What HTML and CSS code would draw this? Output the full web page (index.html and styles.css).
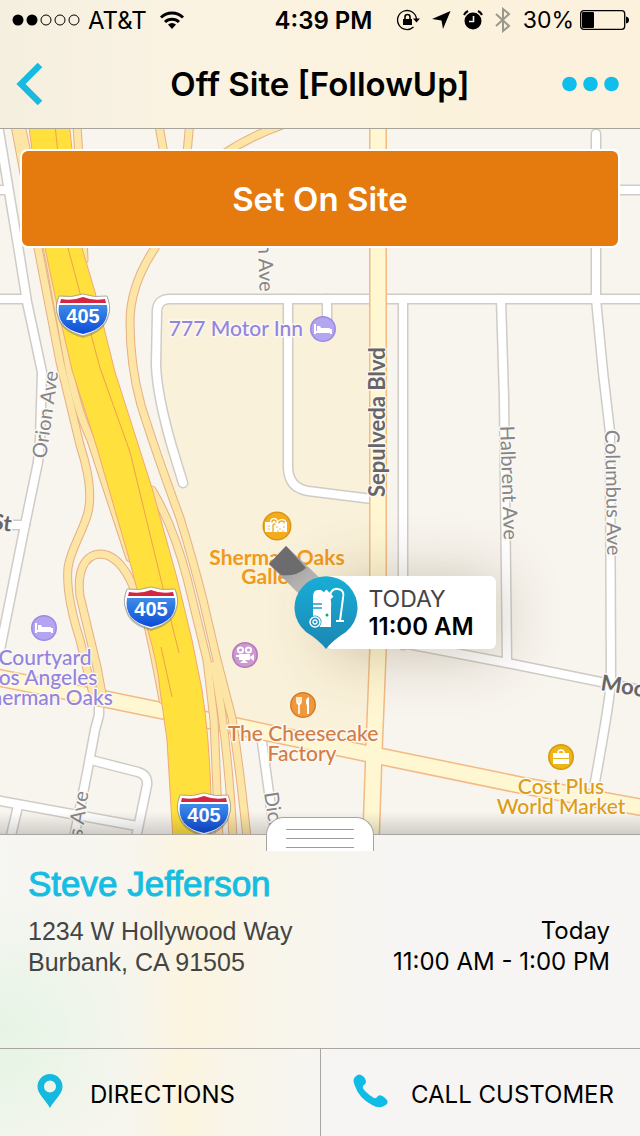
FILE: index.html
```html
<!DOCTYPE html>
<html lang="en">
<head>
    <meta charset="UTF-8">
    <meta name="viewport" content="width=device-width, initial-scale=1.0">
    <title>Off Site [FollowUp]</title>
    <link rel="stylesheet" href="styles.css">
</head>
<body>
    <header class="top">
        <div class="status-bar">
            <div class="status-left">
                <svg width="68" height="12" viewBox="0 0 68 12">
                    <circle cx="6" cy="6" r="5.5"/>
                    <circle cx="20" cy="6" r="5.5"/>
                    <g fill="none" stroke="#000">
                        <circle cx="34" cy="6" r="5"/>
                        <circle cx="48" cy="6" r="5"/>
                        <circle cx="62" cy="6" r="5"/>
                    </g>
                </svg>
                <span>AT&amp;T</span>
                <svg class="wifi" width="32" height="20" viewBox="-4 0 32 20">
                    <g fill="none" stroke="#000" stroke-width="3">
                        <path d="M2 7.500a16 16 0 0 1 22 0"/>
                        <path d="M6 12a10 10 0 0 1 14 0"/>
                    </g>
                    <path d="M13 19l-4-4.500a6 6 0 0 1 8 0z"/>
                </svg>
            </div>
            <div class="status-time">4:39 PM</div>
            <div class="status-right">
                <svg width="24" height="22" viewBox="0 0 24 22">
                    <path d="M20.500 10a9.500 9.500 0 1 0-3 8" fill="none" stroke="#000" stroke-width="1.300"/>
                    <path d="M17 9.500h7l-3.500 4z"/>
                    <path d="M7 10h9v6H7z"/>
                    <path d="M9 10V8a2.500 2.500 0 0 1 5 0v2" fill="none" stroke="#000" stroke-width="1.600"/>
                </svg>
                <svg width="19" height="18" viewBox="0 0 19 18">
                    <path d="M18.500 0L11 18l-1.500-8.500L0 8z"/>
                </svg>
                <svg width="20" height="20" viewBox="0 0 20 20">
                    <circle cx="10" cy="11" r="8.500"/>
                    <path d="M1 5a8 8 0 0 1 4-4M15 1a8 8 0 0 1 4 4" fill="none" stroke="#000" stroke-width="2"/>
                    <path d="M10.500 6v5.500H6" fill="none" stroke="#fbf3dd" stroke-width="1.600"/>
                </svg>
                <svg width="16" height="26" viewBox="0 0 16 26" fill="none" stroke="#9c978b" stroke-width="2">
                    <path d="M1 7l13 12-6 5V2l6 5L1 19"/>
                </svg>
                <span class="battery">30%
                    <svg width="49" height="20" viewBox="0 0 49 20">
                        <rect x=".7" y=".7" width="44" height="18.600" rx="3" fill="none" stroke="#000" stroke-width="1.300"/>
                        <rect x="2" y="2" width="12" height="16" rx="1"/>
                        <path d="M46 6.500q3 .5 3 3.500t-3 3.500z"/>
                    </svg>
                </span>
            </div>
        </div>
        <nav class="nav-bar">
            <button class="nav-btn back" aria-label="Back">
                <svg width="28" height="44" viewBox="0 0 28 44">
                    <path d="M24 3L5 22l19 19" fill="none" stroke="#18bbdf" stroke-width="6.500"/>
                </svg>
            </button>
            <h1 class="title">Off Site [FollowUp]</h1>
            <button class="nav-btn more" aria-label="More">
                <svg width="57" height="16" viewBox="0 0 57 16" fill="#0fbeea">
                    <circle cx="7.500" cy="8" r="7.300"/>
                    <circle cx="28.500" cy="8" r="7.300"/>
                    <circle cx="49.500" cy="8" r="7.300"/>
                </svg>
            </button>
        </nav>
    </header>

    <main class="map">
        <svg class="map-art" viewBox="0 129 640 705">
            <defs>
                <linearGradient id="shieldBlue" x1="0" y1="0" x2="0" y2="1">
                    <stop offset="0" stop-color="#3f8be8"/>
                    <stop offset="1" stop-color="#0c4bd8"/>
                </linearGradient>
                <linearGradient id="stick" x1="0" y1="0" x2="1" y2="1">
                    <stop offset="0" stop-color="#8b8b8b"/>
                    <stop offset="1" stop-color="#c9c9c9"/>
                </linearGradient>
                <linearGradient id="edgeShade" x1="0" y1="0" x2="0" y2="1">
                    <stop offset="0" stop-color="#000" stop-opacity="0"/>
                    <stop offset="1" stop-color="#000" stop-opacity=".16"/>
                </linearGradient>

                <g id="streets">
                    <path d="M-2 125L20 258L27 302L42 372L40 440L38 462L25 525L7 615L0 650"/>
                    <path d="M-5 190H7M-5 299H26M5 525H25"/>
                    <path d="M183 483L172 447Q157 395 156 365L157 312Q157 299 170 299H645"/>
                    <path d="M288 299V468Q289 488 308 491L372 499"/>
                    <path d="M327 299V325"/>
                    <path d="M403 299V645"/>
                    <path d="M501 299L504 398L507 662"/>
                    <path d="M596 134V299L603 372L610 432L611 680Q610 700 595 782"/>
                    <path d="M615 190H645M403 643L507 663L645 691"/>
                    <path d="M99 700L99 715L95 730L87 773L74 838"/>
                    <path d="M95 761L138 772Q148 775 147 785L136 838"/>
                    <path d="M-5 800L137 826M18 806L10 840"/>
                    <path d="M262 742L270 800L275 838"/>
                </g>
                <g id="arterials">
                    <path d="M378 125V650L374 750L371 838"/>
                    <path d="M-5 677L100 698L207 720L374 755L520 785L645 808"/>
                </g>
                <g id="ramps">
                    <path d="M15 125L38 248L60 362L80 445Q94 488 88 512C84 530 70 550 68 568C66 590 72 615 80 640L92 690"/>
                    <path d="M21 125L50 262L68 362Q76 408 91 440L130 558"/>
                    <path d="M138 600C130 574 117 554 100 554C83 555 77 574 80 596L97 667L102 694"/>
                    <path d="M77 125L81 190L84 260"/>
                    <path d="M158 120L166 165M190 120L186 165M222 155Q250 136 285 124"/>
                    <path d="M155 248Q130 285 130 322Q130 365 141 405Q155 450 180 518Q193 560 203 600L217 660L232 718Q240 770 247 838"/>
                    <path d="M152 490Q173 525 187 578L207 660L214 720L219 838"/>
                    <path d="M214 665Q228 740 233 838"/>
                    <path d="M143 605Q152 640 163 700"/>
                </g>

                <g id="shield">
                    <path d="M-25-17Q-12-15 0-21Q12-15 25-17Q28-8 26 0Q23 17 0 23Q-23 17-26 0Q-28-8-25-17Z" fill="#555" opacity=".35"/>
                    <path d="M-24-19Q-11-17 0-21Q11-17 24-19Q28-8 26-2Q23 15 0 21Q-23 15-26-2Q-28-8-24-19Z" fill="#fff" stroke="#8a8a8a" stroke-width=".7"/>
                    <path d="M-22-16Q-10-14 0-18Q10-14 22-16L23-12H-23Z" fill="#d52540"/>
                    <path d="M-24-10H24Q28 13 0 19Q-28 13-24-10Z" fill="url(#shieldBlue)"/>
                    <text class="shield-text" y="8">405</text>
                </g>
                <g id="bed">
                    <circle r="13" fill="#9c89e4"/>
                    <circle r="11.500" fill="#b4a5f2"/>
                    <path d="M-8-5V5M-8 3H8M8 5V0" fill="none" stroke="#fff" stroke-width="2"/>
                    <path d="M-6-3h3l1 2 9 0v3h-13z" fill="#fff"/>
                </g>
            </defs>

            <rect y="129" width="640" height="705" fill="#f8f4ee"/>
            <path d="M161 303H378V752L232 718L205 600L160 440Z" fill="#faf1da"/>

            <use href="#streets" class="line street-edge"/>
            <use href="#streets" class="line street"/>
            <use href="#arterials" class="line arterial-edge"/>
            <use href="#arterials" class="line arterial"/>
            <use href="#ramps" class="line ramp-edge"/>
            <use href="#ramps" class="line ramp"/>

            <!-- 405 freeway -->
            <path class="freeway" d="M28 120L45 248L57 305L72 370L97 448L128 555L147 627Q158 665 160 690L167 740L173 840H211V793Q209 735 202 690L192 640L177 578L152 488L115 372L95 292L82 248L69 120Z"/>
            <path class="freeway-line" d="M55 125L68 248L100 368L130 452L163 588L179 653M161 647L172 697"/>

            <g class="road-label">
                <text transform="translate(46 459) rotate(-82)">Orion Ave</text>
                <text transform="translate(258 243) rotate(88)">n Ave</text>
                <text transform="translate(500 426) rotate(88)">Halbrent Ave</text>
                <text transform="translate(605 430) rotate(89)">Columbus Ave</text>
                <text transform="translate(82 838) rotate(-82)">s Ave</text>
                <text transform="translate(264 793) rotate(81)">Dickens</text>
            </g>
            <g class="road-label main-road">
                <text transform="translate(385 497) rotate(-90)">Sepulveda Blvd</text>
                <text transform="translate(600 690) rotate(9)">Moorpark</text>
                <text transform="translate(-9 529) rotate(7)">St</text>
            </g>

            <use href="#shield" x="83" y="315"/>
            <use href="#shield" x="151" y="608"/>
            <use href="#shield" x="204" y="814"/>

            <!-- points of interest -->
            <use href="#bed" x="323" y="329"/>
            <use href="#bed" x="44" y="628"/>
            <g transform="translate(277 526)">
                <circle r="14.500" fill="#dc9416"/>
                <circle r="13" fill="#f3ad1c"/>
                <path d="M-9-4h2q0-4 4-4t4 4h0q0-3 4-3t4 3h1v10h-22v-10z" fill="#fff"/>
                <path d="M-5-4q0-2 2-2t2 2M2-3q0-2 3-2t2 2M-2-2q-2 0-2 2v6" fill="none" stroke="#eda721" stroke-width="1.300" stroke-linecap="round"/>
                <path d="M-8 0v0M-8 3v0M0 1v0M3 3v0M7 1v0M1 5v0M6 5v0" stroke="#eda721" stroke-width="1.500" stroke-linecap="round"/>
            </g>
            <g transform="translate(245 655)">
                <circle r="13" fill="#b27ab8"/>
                <circle r="11.500" fill="#cb99d0"/>
                <circle cx="-4.500" cy="-5" r="2.600" fill="none" stroke="#fff" stroke-width="2"/>
                <circle cx="3.500" cy="-5" r="2.600" fill="none" stroke="#fff" stroke-width="2"/>
                <path d="M-6-1H5v6h-11zM5 2l4-3v7l-4-3zM-5 8l4-4 4 4" fill="#fff"/>
                <path d="M-9 1h3" stroke="#fff" stroke-width="2"/>
            </g>
            <g transform="translate(303 705)">
                <circle r="13" fill="#d77c2d"/>
                <circle r="11.500" fill="#ee993b"/>
                <path d="M-6-8v5q0 2 2 2.500V9M-2-8v5q0 2-2 2.500M-4-8v7" fill="none" stroke="#fff" stroke-width="1.600"/>
                <path d="M4 9V1Q1-6 6-8V9z" fill="#fff"/>
            </g>
            <g transform="translate(561 757)">
                <circle r="13" fill="#d8970b"/>
                <circle r="11.500" fill="#ecb518"/>
                <path d="M-8-4H8V1H-8zM-8 2H8V7H-8z" fill="#fff"/>
                <path d="M-3-4q0-3 3-3t3 3" fill="none" stroke="#fff" stroke-width="1.500"/>
            </g>

            <g class="poi-label">
                <text class="lodging end" x="303" y="336">777 Motor Inn</text>
                <g class="lodging">
                    <text x="45" y="665">Courtyard</text>
                    <text x="43" y="685">Los Angeles</text>
                    <text x="46" y="705">Sherman Oaks</text>
                </g>
                <g class="mall">
                    <text x="277" y="565">Sherman Oaks</text>
                    <text x="277" y="584">Galleria</text>
                </g>
                <g class="food">
                    <text x="303" y="741">The Cheesecake</text>
                    <text x="302" y="761">Factory</text>
                </g>
                <g class="shop">
                    <text x="561" y="794">Cost Plus</text>
                    <text x="561" y="814">World Market</text>
                </g>
            </g>

            <path d="M286 546L269 564L300 595L322 580Z" fill="url(#stick)"/>
            <path d="M286 546L269 564L281 575Q296 577 306 568Z" fill="#6d6d6f"/>
            <rect y="812" width="640" height="22" fill="url(#edgeShade)"/>
        </svg>

        <button class="set-btn">Set On Site</button>

        <div class="callout">
            <svg class="pin" width="64" height="74" viewBox="0 0 64 74">
                <defs>
                    <linearGradient id="pinBlue" x1="0" y1="0" x2="0" y2="1">
                        <stop offset="0" stop-color="#17aed6"/>
                        <stop offset="1" stop-color="#1c86b3"/>
                    </linearGradient>
                </defs>
                <path d="M32 73Q25 64 12 56A31.500 31.500 0 1 1 52 56Q39 64 32 73Z" fill="url(#pinBlue)"/>
                <!-- vacuum cleaner -->
                <path d="M19 42V21Q19 14 24 14H27L35 20Q38 24 37 32V51H26Z" fill="#fff"/>
                <path d="M19 28H28M19 32H28" stroke="#1a9fca" stroke-width="1.300"/>
                <circle cx="33" cy="39" r="1.500" fill="#13a47a"/>
                <circle cx="21" cy="46" r="6.500" fill="#1a94c0"/>
                <circle cx="21" cy="46" r="5" fill="none" stroke="#fff" stroke-width="1.500"/>
                <circle cx="21" cy="46" r="2" fill="none" stroke="#fff" stroke-width="1.300"/>
                <path d="M31 15l7 7" stroke="#fff" stroke-width="4"/>
                <path d="M36 19Q38 12 44 13Q51 14 49 22L46 45M42 45h8" fill="none" stroke="#fff" stroke-width="2"/>
            </svg>
            <div class="callout-text">
                <span>TODAY</span>
                <strong>11:00 AM</strong>
            </div>
        </div>
    </main>

    <section class="panel">
        <button class="handle" aria-label="Drag panel">
            <svg width="68" height="20" viewBox="0 0 68 20" stroke="#9a9a9a">
                <path d="M0 .5h68M0 9.500h68M0 18.500h68"/>
            </svg>
        </button>
        <h2 class="name">Steve Jefferson</h2>
        <div class="details">
            <address class="address">1234 W Hollywood Way<br>Burbank, CA 91505</address>
            <div class="slot">Today<br>11:00 AM - 1:00 PM</div>
        </div>
    </section>

    <footer class="actions">
        <button class="action">
            <span class="action-icon">
                <svg width="26" height="34" viewBox="0 0 26 34">
                    <path fill="#13b9df" fill-rule="evenodd" d="M13 0A12.500 12.500 0 0 0 .5 12.500C.5 20 8 25 13 34C18 25 25.500 20 25.500 12.500A12.500 12.500 0 0 0 13 0ZM13 6.500A6 6 0 1 1 13 18.500A6 6 0 1 1 13 6.500Z"/>
                </svg>
            </span>
            DIRECTIONS
        </button>
        <button class="action">
            <span class="action-icon">
                <svg width="36" height="34" viewBox="0 0 36 34">
                    <path fill="#0fbce6" d="M2 3Q6-2 11 3Q15 8 11 11Q8 13 12 17Q17 22 21 24Q23 25 25 22Q28 20 32 24L34 26Q36 30 31 32Q26 35 19 31Q6 24 2 12Q-1 6 2 3Z"/>
                </svg>
            </span>
            CALL CUSTOMER
        </button>
    </footer>
</body>
</html>
```

FILE: styles.css
```css
* {
    box-sizing: border-box;
}
body {
    margin: 0;
    font-family: Inter, "Liberation Sans", sans-serif;
    color: #000;
    background-color: #f7f5f3;
    min-height: 100vh;
    display: flex;
    flex-direction: column;
}
button {
    font: inherit;
    color: inherit;
    background: none;
    border: none;
    padding: 0;
    cursor: pointer;
}
svg {
    display: block;
    flex: none;
}

/* Header */
.top {
    background: linear-gradient(90deg, #f5efe0, #faf3e2 30%, #fbf2dc 70%, #fbf1dc);
    border-bottom: 1px solid #a8a49a;
}
.status-bar {
    display: grid;
    grid-template-columns: 1fr auto 1fr;
    align-items: center;
    height: 40px;
    padding: 0 11px 0 12px;
    font-size: 24px;
}
.status-left,
.status-right,
.battery {
    display: flex;
    align-items: center;
}
.status-left {
    gap: 8px;
}
.status-right {
    justify-content: flex-end;
    gap: 12px;
}
.battery {
    gap: 6px;
    font-size: 23px;
}
.status-time {
    font-weight: 600;
    padding-left: 6px;
}
.nav-bar {
    display: grid;
    grid-template-columns: 80px 1fr 80px;
    align-items: center;
    height: 88px;
}
.nav-btn {
    height: 88px;
    display: flex;
    align-items: center;
}
.back {
    padding-left: 16px;
}
.more {
    justify-content: flex-end;
    padding-right: 21px;
}
.title {
    margin: 0;
    text-align: center;
    font-size: 33px;
    font-weight: 600;
}

/* Map */
.map {
    position: relative;
    overflow: hidden;
}
.map-art {
    width: 100%;
    height: auto;
}
.line {
    fill: none;
    stroke-linecap: round;
    stroke-linejoin: round;
}
.street-edge {
    stroke: #cfcbc7;
    stroke-width: 11px;
}
.street {
    stroke: #fff;
    stroke-width: 8px;
}
.arterial-edge {
    stroke: #f3ba84;
    stroke-width: 18px;
}
.arterial {
    stroke: #fff7d2;
    stroke-width: 15px;
}
.ramp-edge {
    stroke: #e6b083;
    stroke-width: 9px;
}
.ramp {
    stroke: #fde5a5;
    stroke-width: 7px;
}
.freeway {
    fill: #ffe03d;
    stroke: #f0a878;
}
.freeway-line {
    fill: none;
    stroke: #eda14f;
}
.road-label,
.poi-label {
    font-family: Lato, "Open Sans", sans-serif;
    font-size: 20px;
    paint-order: stroke;
    stroke: #fbf8f2;
    stroke-width: 3px;
    stroke-linejoin: round;
}
.road-label {
    fill: #85858a;
}
.main-road {
    fill: #66666a;
    font-size: 22px;
    font-weight: 700;
}
.poi-label {
    font-size: 21px;
    font-weight: 500;
    text-anchor: middle;
}
.end {
    text-anchor: end;
}
.lodging {
    fill: #9384de;
}
.mall {
    fill: #ef9a1d;
    font-weight: 700;
    stroke: #fbf2dc;
}
.food {
    fill: #d37d45;
}
.shop {
    fill: #dd9d12;
}
.shield-text {
    font: 700 20px "Liberation Sans", sans-serif;
    fill: #fff;
    text-anchor: middle;
}
.set-btn {
    position: absolute;
    top: 20px;
    left: 20px;
    right: 20px;
    height: 99px;
    background-color: #e57a0e;
    border: 2px solid #fff;
    border-radius: 8px;
    color: #fff;
    font-size: 33px;
    font-weight: 600;
}
.callout {
    position: absolute;
    left: 46%;
    top: 63%;
    display: flex;
}
.callout::before {
    content: "";
    position: absolute;
    left: 32px;
    right: 0;
    top: 3px;
    height: 73px;
    background-color: #fff;
    border-radius: 6px;
    box-shadow: 4px 4px 60px rgba(90, 70, 30, 0.3);
}
.pin {
    position: relative;
    margin-top: 3px;
}
.callout-text {
    position: relative;
    display: flex;
    flex-direction: column;
    padding: 12px 22px 0 10px;
    font-size: 24px;
    line-height: 28px;
}
.callout-text span {
    color: #444;
    font-size: 23px;
}
.callout-text strong {
    font-weight: 600;
}

/* Customer panel */
.panel {
    position: relative;
    flex: 1;
    min-height: 214px;
    border-top: 1px solid #a9a6a1;
    padding: 31px 30px 0 28px;
    background:
        radial-gradient(ellipse 160px 130px at 0 90%, rgba(226, 244, 226, 0.8), transparent),
        linear-gradient(90deg, #f6f6f2, #f7f5ee 20%, #fbf4df 30%, #f9f5ea 42%, #f7f5f3 60%);
}
.handle {
    position: absolute;
    top: -18px;
    left: 50%;
    width: 108px;
    height: 34px;
    margin-left: -54px;
    display: flex;
    justify-content: center;
    padding-top: 11px;
    background-color: #fff;
    border: 1px solid #a5a5a5;
    border-bottom: none;
    border-radius: 18px 18px 0 0;
}
.name {
    margin: 0;
    font-family: "Liberation Sans", Arial, sans-serif;
    font-size: 35px;
    font-weight: 400;
    line-height: 36px;
    color: #16bde2;
    -webkit-text-stroke: 1px #16bde2;
}
.details {
    display: flex;
    justify-content: space-between;
    margin-top: 13px;
    line-height: 31px;
}
.address {
    font-family: "Liberation Sans", Arial, sans-serif;
    font-size: 25px;
    font-style: normal;
    color: #444;
    padding-top: 1px;
}
.slot {
    text-align: right;
    font-size: 24px;
}

/* Bottom actions */
.actions {
    display: grid;
    grid-template-columns: 1fr 1fr;
    border-top: 1px solid #a9a6a1;
    background:
        radial-gradient(ellipse 140px 110px at 0 0, rgba(226, 244, 226, 0.8), transparent),
        linear-gradient(90deg, #f4f5ef, #f7f5ee 20%, #fbf4df 28%, #f9f5ea 36%, #f7f5f3 50%);
}
.action {
    display: flex;
    align-items: center;
    height: 87px;
    padding-top: 4px;
    font-size: 24px;
}
.action + .action {
    border-left: 1px solid #a9a6a1;
}
.action-icon {
    width: 90px;
    height: 42px;
    padding-left: 10px;
    display: flex;
    justify-content: center;
}
```
